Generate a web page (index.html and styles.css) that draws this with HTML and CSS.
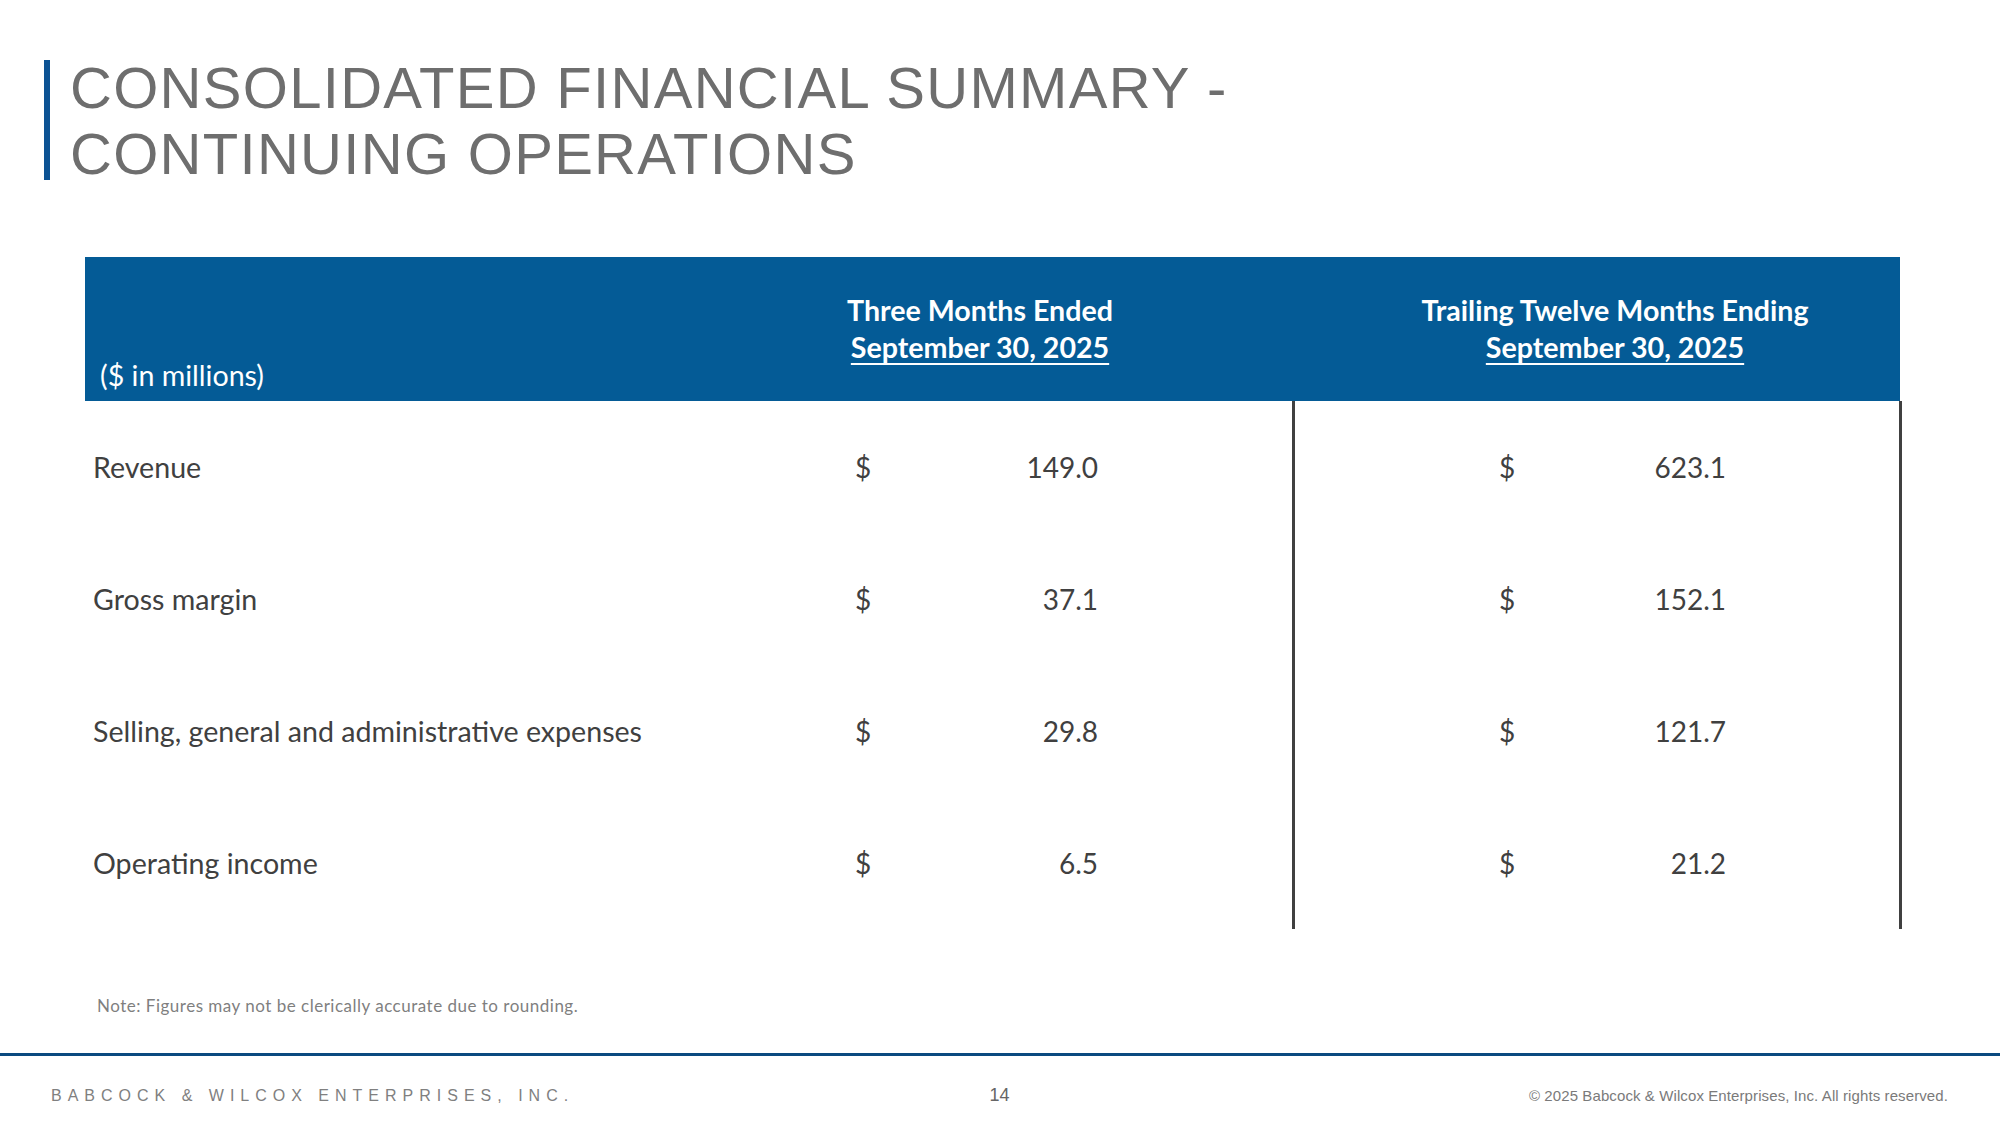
FILE: index.html
```html
<!DOCTYPE html>
<html lang="en">
<head>
<meta charset="utf-8">
<title>Consolidated Financial Summary - Continuing Operations</title>
<link rel="stylesheet" href="styles.css">
</head>
<body>
<div class="slide">
  <header class="title-block">
    <div class="title-bar"></div>
    <h1 class="title">CONSOLIDATED FINANCIAL SUMMARY -<br>CONTINUING OPERATIONS</h1>
  </header>

  <section class="fin-table">
    <div class="thead">
      <div class="th th-label">($ in millions)</div>
      <div class="th th-a">
        <span class="th-line">Three Months Ended</span>
        <span class="th-line th-date">September 30, 2025</span>
      </div>
      <div class="th th-b">
        <span class="th-line">Trailing Twelve Months Ending</span>
        <span class="th-line th-date">September 30, 2025</span>
      </div>
    </div>
    <div class="tbody">
      <div class="td td-label">Revenue</div>
      <div class="td td-a"><span class="cur">$</span><span class="num">149.0</span></div>
      <div class="td td-b"><span class="cur">$</span><span class="num">623.1</span></div>

      <div class="td td-label">Gross margin</div>
      <div class="td td-a"><span class="cur">$</span><span class="num">37.1</span></div>
      <div class="td td-b"><span class="cur">$</span><span class="num">152.1</span></div>

      <div class="td td-label">Selling, general and administrative expenses</div>
      <div class="td td-a"><span class="cur">$</span><span class="num">29.8</span></div>
      <div class="td td-b"><span class="cur">$</span><span class="num">121.7</span></div>

      <div class="td td-label">Operating income</div>
      <div class="td td-a"><span class="cur">$</span><span class="num">6.5</span></div>
      <div class="td td-b"><span class="cur">$</span><span class="num">21.2</span></div>
    </div>
  </section>

  <p class="note">Note: Figures may not be clerically accurate due to rounding.</p>

  <footer class="footer">
    <div class="footer-company">BABCOCK &amp; WILCOX ENTERPRISES, INC.</div>
    <div class="footer-page">14</div>
    <div class="footer-copy">© 2025 Babcock &amp; Wilcox Enterprises, Inc. All rights reserved.</div>
  </footer>
</div>
</body>
</html>
```
FILE: styles.css
```css
* { box-sizing: border-box; }

html, body {
  margin: 0;
  padding: 0;
  background: #ffffff;
}

.slide {
  width: 2000px;
  height: 1125px;
  overflow: hidden;
  display: flex;
  flex-direction: column;
  padding-top: 55px;
  font-family: "Lato", "Liberation Sans", sans-serif;
}

/* ---------- Title ---------- */
.title-block {
  display: flex;
  align-items: flex-start;
  padding-left: 44px;
}

.title-bar {
  width: 6px;
  height: 120px;
  margin-top: 5px;
  background: #0c5394;
  flex: none;
}

.title {
  margin: 0 0 0 20px;
  font-family: "Liberation Sans", Arial, sans-serif;
  font-weight: 400;
  font-size: 58px;
  line-height: 66px;
  letter-spacing: 1.3px;
  color: #6e6e6e;
}

/* ---------- Table ---------- */
.fin-table {
  margin: 70px 0 0 85px;
  width: 1817px;
}

.thead,
.tbody {
  display: grid;
}

.thead {
  grid-template-columns: 583px 624px 608px;
  width: 1815px;
  height: 144px;
  background: #045b96;
  color: #ffffff;
}

.tbody {
  grid-template-columns: 583px 624px 610px;
}

.th {
  font-size: 28.6px;
  line-height: 37px;
}

.th-label {
  align-self: end;
  padding: 0 0 7px 15px;
  font-weight: 400;
}

.th-a,
.th-b {
  display: flex;
  flex-direction: column;
  align-items: center;
  padding-top: 35px;
  font-weight: 700;
}

.th-b {
  padding-left: 38px;
}

.th-date {
  text-decoration: underline;
  text-decoration-thickness: 2px;
  text-underline-offset: 5px;
}

.tbody {
  grid-auto-rows: 132px;
  color: #404040;
}

.td {
  font-size: 28px;
  line-height: 132px;
  white-space: nowrap;
}

.td-label {
  padding-left: 8px;
  font-size: 28.6px;
}

.td-a,
.td-b {
  display: flex;
}

.td-a {
  padding: 0 194px 0 187px;
}

.td-b {
  padding: 0 173px 0 204px;
  border-left: 3px solid #404040;
  border-right: 3px solid #404040;
}

.num {
  margin-left: auto;
}

/* ---------- Note ---------- */
.note {
  margin: 67px 0 0 97px;
  font-size: 17px;
  line-height: 20px;
  letter-spacing: 0.5px;
  color: #7f7f7f;
}

/* ---------- Footer ---------- */
.footer {
  margin-top: 37px;
  border-top: 3px solid #0b4a80;
  flex: 1;
  display: grid;
  grid-template-columns: 1fr auto 1fr;
  align-items: center;
  padding: 10px 52px 0 51px;
  font-family: "Liberation Sans", Arial, sans-serif;
  color: #6f6f6f;
}

.footer-company {
  font-size: 16px;
  letter-spacing: 6px;
  color: #808080;
}

.footer-page {
  font-size: 18px;
  color: #666666;
}

.footer-copy {
  justify-self: end;
  font-size: 15px;
  letter-spacing: 0.1px;
  color: #7a7a7a;
}
```
